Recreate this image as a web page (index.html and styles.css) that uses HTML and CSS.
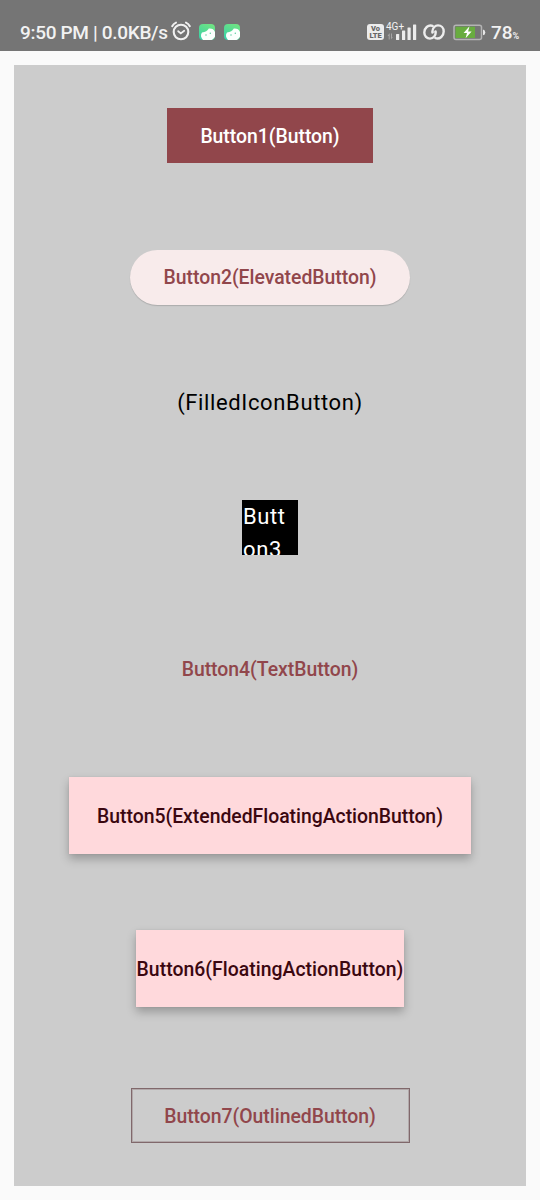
FILE: index.html
```html
<!DOCTYPE html>
<html lang="en">
<head>
<meta charset="utf-8">
<title>Buttons</title>
<link rel="stylesheet" href="styles.css">
</head>
<body>
<header class="status">
  <span class="clock">9:50 PM | 0.0KB/s</span>
  <svg class="alarm" width="20" height="20" viewBox="0 0 20 20" fill="none" stroke="#f0f0f0" stroke-linecap="round">
    <circle cx="10" cy="11" r="7.3" stroke-width="2.1"/>
    <path d="M1.2 5.2Q2.4 2.7 5 1.6M18.8 5.2Q17.6 2.7 15 1.6" stroke-width="2"/>
    <path d="M7.2 10.2L9.8 12.4L13.2 9.8" stroke-width="1.8"/>
  </svg>
  <svg class="app" width="16" height="16" viewBox="0 0 16 16">
    <defs>
      <linearGradient id="leaf" x1="0.7" y1="0" x2="0.2" y2="1"><stop offset="0" stop-color="#6fe383"/><stop offset="1" stop-color="#37d1a8"/></linearGradient>
      <clipPath id="tile"><rect width="16" height="16" rx="4"/></clipPath>
    </defs>
    <g clip-path="url(#tile)">
      <rect width="16" height="16" fill="url(#leaf)"/>
      <path d="M4 16Q0.5 12 3 8.5Q8 8 9.8 4.6Q14.5 4.2 16 8V13L13 16Z" fill="#fbfffd"/>
      <circle cx="7" cy="11" r=".75" fill="#5dcea0"/><circle cx="11.3" cy="9.3" r=".75" fill="#5dcea0"/>
    </g>
  </svg>
  <svg class="app" width="16" height="16" viewBox="0 0 16 16">
    <g clip-path="url(#tile)">
      <rect width="16" height="16" fill="url(#leaf)"/>
      <path d="M4 16Q0.5 12 3 8.5Q8 8 9.8 4.6Q14.5 4.2 16 8V13L13 16Z" fill="#fbfffd"/>
      <circle cx="7" cy="11" r=".75" fill="#5dcea0"/><circle cx="11.3" cy="9.3" r=".75" fill="#5dcea0"/>
    </g>
  </svg>
  <div class="volte"><span>Vo</span><span>LTE</span></div>
  <div class="network">
    <span class="gen">4G+</span>
    <svg width="31" height="17" viewBox="0 0 31 17" fill="#ececec">
      <path d="M3.2 9.5L1.6 12H2.7V15.5H3.7V9.5ZM5 9.5V15.5L6.8 13H6V9.5Z" fill="#a5a5a5"/>
      <rect x="10" y="10" width="3.2" height="6" rx=".6"/>
      <rect x="16" y="6.5" width="3.2" height="9.5" rx=".6"/>
      <rect x="21.5" y="3.5" width="3.2" height="12.5" rx=".6"/>
      <rect x="27" y="0.5" width="3.2" height="15.5" rx=".6"/>
    </svg>
  </div>
  <svg class="link" width="22" height="16" viewBox="0 0 22 16" fill="none" stroke="#ededed" stroke-width="2.4" stroke-linecap="round">
    <path d="M9.6 1.8C5 0.4 1.3 4.2 1.3 8.5C1.3 12 3.8 14.6 7 14.6C10.4 14.6 13.2 11.6 12.6 7.4"/>
    <path d="M12.4 14.2C17 15.6 20.7 11.8 20.7 7.5C20.7 4 18.2 1.4 15 1.4C12.2 1.4 9.6 3.8 9.4 7.2L9.4 8.6"/>
    <path d="M9.4 8.2L12.6 7.8" stroke-width="1"/>
  </svg>
  <svg class="battery" width="34" height="17" viewBox="0 0 34 17">
    <rect x="1" y="1.2" width="27.5" height="14.3" rx="2" fill="none" stroke="#b4b4b4" stroke-width="1.5"/>
    <rect x="2.5" y="2.7" width="19.5" height="11.3" fill="#68ac3f"/>
    <path d="M30 5.5Q32.3 6 32.3 8.4Q32.3 10.8 30 11.3Z" fill="#e8e8e8"/>
    <path d="M16.5 2.3L10.6 9H14L12.6 14.3L18.6 7.5H15.1Z" fill="#fff"/>
  </svg>
  <span class="percent">78<small>%</small></span>
</header>
<main class="panel">
  <div class="slot"><button class="btn filled">Button1(Button)</button></div>
  <div class="slot"><button class="btn elevated">Button2(ElevatedButton)</button></div>
  <div class="label">(FilledIconButton)</div>
  <div class="slot"><button class="icon-btn">Button3</button></div>
  <div class="slot"><button class="btn text">Button4(TextButton)</button></div>
  <button class="btn fab extended">Button5(ExtendedFloatingActionButton)</button>
  <button class="btn fab compact">Button6(FloatingActionButton)</button>
  <div class="slot"><button class="btn outlined">Button7(OutlinedButton)</button></div>
</main>
</body>
</html>
```
FILE: styles.css
```css
* { box-sizing: border-box; }

body {
  margin: 0;
  height: 1200px;
  display: flex;
  flex-direction: column;
  background: #fafafa;
  font-family: Roboto, sans-serif;
  overflow: hidden;
}

.status {
  height: 51px;
  flex: none;
  display: flex;
  align-items: flex-start;
  padding: 22px 20px 0;
  background: #757575;
  color: #f2f2f2;
  white-space: nowrap;
}

.status svg { display: block; flex: none; }

.clock {
  width: 151px;
  font-size: 19px;
  font-weight: 500;
  line-height: 22px;
  letter-spacing: -0.32px;
}

.alarm { margin-top: -1px; }
.app { margin: 2px 0 0 8px; }
.app + .app { margin-left: 9px; }

.volte {
  width: 17px;
  height: 16px;
  margin: 2px 0 0 127px;
  padding-top: 1px;
  border-radius: 3px;
  background: #ececec;
  color: #666;
  font-size: 7.5px;
  font-weight: 900;
  line-height: 7px;
  text-align: center;
}

.volte span { display: block; }

.network {
  position: relative;
  width: 31px;
  margin: 2px 0 0 2px;
}

.gen {
  position: absolute;
  left: 0;
  top: -3px;
  font-size: 10px;
  line-height: 12px;
}

.link { margin: 2px 0 0 6px; }
.battery { margin: 2px 0 0 8px; }

.percent {
  margin-left: 4px;
  font-size: 19px;
  font-weight: 500;
  line-height: 22px;
}

.percent small { font-size: 9px; font-weight: 700; }

.panel {
  height: 1121px;
  margin: 14px 14px 0;
  display: flex;
  flex-direction: column;
  align-items: center;
  justify-content: space-around;
  background: #ccc;
}

.slot {
  height: 66px;
  display: flex;
  align-items: center;
}

.btn {
  height: 55px;
  padding: 1px 0 0;
  border: 0;
  background: none;
  color: #91464b;
  font: 500 19.4px/27.5px Roboto, sans-serif;
  letter-spacing: -0.02px;
  white-space: nowrap;
}

.filled { width: 206.5px; background: #91464b; color: #fff; }

.elevated {
  width: 280px;
  border-radius: 28px;
  background: #f8ebeb;
  box-shadow: 0 1px 1px rgba(0, 0, 0, 0.16);
}

.label {
  height: 33px;
  font-size: 22px;
  line-height: 33px;
  letter-spacing: 0.63px;
  color: #000;
}

.icon-btn {
  width: 56px;
  height: 55px;
  padding: 0 0 0 1px;
  border: 0;
  display: flex;
  align-items: flex-start;
  overflow: hidden;
  background: #000;
  color: #fff;
  font: 400 22px/33px Roboto, sans-serif;
  letter-spacing: 0.6px;
  text-align: left;
  word-break: break-all;
}

.fab {
  height: 77px;
  background: #ffd9dc;
  color: #3b0710;
  box-shadow: 0 5px 9px rgba(0, 0, 0, 0.25), 0 0 2px rgba(0, 0, 0, 0.08);
}

.extended { width: 402px; }
.compact { width: 268px; padding-top: 2px; letter-spacing: 0.03px; }

.outlined {
  width: 279px;
  padding-top: 2px;
  border: 1px solid #80686b;
  box-shadow: inset 0 0 0 1px rgba(128, 104, 107, 0.35);
}
```
